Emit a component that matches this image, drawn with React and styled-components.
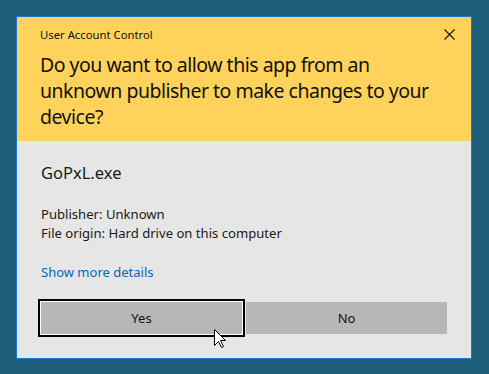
import React from "react";
import styled, { createGlobalStyle } from "styled-components";

const Global = createGlobalStyle`
  html, body { margin: 0; padding: 0; }
  body {
    background: #1f5e79;
    font-family: "Noto Sans", "Open Sans", sans-serif;
    width: 489px;
    height: 374px;
    overflow: hidden;
  }
`;

const Page = styled.div`
  width: 489px;
  height: 374px;
  padding: 16px 0 0 16px;
  box-sizing: border-box;
  position: relative;
`;

const Dialog = styled.div`
  width: 456px;
  height: 343px;
  box-sizing: border-box;
  border: 1px solid #1a78d6;
  display: flex;
  flex-direction: column;
`;

const Header = styled.div`
  background: #ffd35b;
  height: 124px;
  flex: none;
  box-sizing: border-box;
  padding: 9px 0 0 23px;
  color: #111;
`;

const TitleBar = styled.div`
  display: flex;
  align-items: center;
  justify-content: space-between;
  height: 16px;
  font-size: 11.3px;
  padding-right: 16px;
`;

const Question = styled.div`
  margin-top: 10px;
  font-size: 19.5px;
  letter-spacing: -0.5px;
  line-height: 26px;
  width: 400px;
`;

const Body = styled.div`
  background: #e6e6e6;
  flex: 1;
  padding: 21px 0 0 24px;
  color: #1a1a1a;
`;

const FileName = styled.div`
  font-size: 16.5px;
  line-height: 22px;
`;

const Info = styled.div`
  margin-top: 21px;
  font-size: 13.1px;
  line-height: 19px;
`;

const Link = styled.div`
  margin-top: 20px;
  font-size: 13px;
  line-height: 19px;
  color: #0067c0;
`;

const Buttons = styled.div`
  display: flex;
  gap: 4px;
  margin-top: 20px;
`;

const Button = styled.div`
  width: 201px;
  height: 32px;
  background: #b7b7b7;
  display: flex;
  align-items: center;
  justify-content: center;
  font-size: 13px;
  color: #111;
  box-shadow: ${(p) => (p.$focused ? "0 0 0 1px #fff, 0 0 0 3px #000" : "none")};
`;

const Cursor = styled.svg`
  position: absolute;
  left: 214px;
  top: 329px;
`;

export default function App() {
  return (
    <Page>
      <Global />
      <Dialog>
        <Header>
          <TitleBar>
            <span>User Account Control</span>
            <svg width="11" height="11" viewBox="0 0 11 11">
              <path d="M0.5 0.5 L10.5 10.5 M10.5 0.5 L0.5 10.5" stroke="#111" strokeWidth="1.1" />
            </svg>
          </TitleBar>
          <Question>
            Do you want to allow this app from an unknown publisher to make changes to your device?
          </Question>
        </Header>
        <Body>
          <FileName>GoPxL.exe</FileName>
          <Info>
            Publisher: Unknown
            <br />
            File origin: Hard drive on this computer
          </Info>
          <Link>Show more details</Link>
          <Buttons>
            <Button $focused>Yes</Button>
            <Button>No</Button>
          </Buttons>
        </Body>
      </Dialog>
      <Cursor width="13" height="20" viewBox="0 0 13 20">
        <path
          d="M0.5 0.5 L0.5 16.5 L4.5 12.5 L7.5 18.5 L9.5 17.5 L6.5 11.5 L11.5 11.5 Z"
          fill="#fff"
          stroke="#000"
          strokeWidth="1"
          strokeLinejoin="miter"
        />
      </Cursor>
    </Page>
  );
}
